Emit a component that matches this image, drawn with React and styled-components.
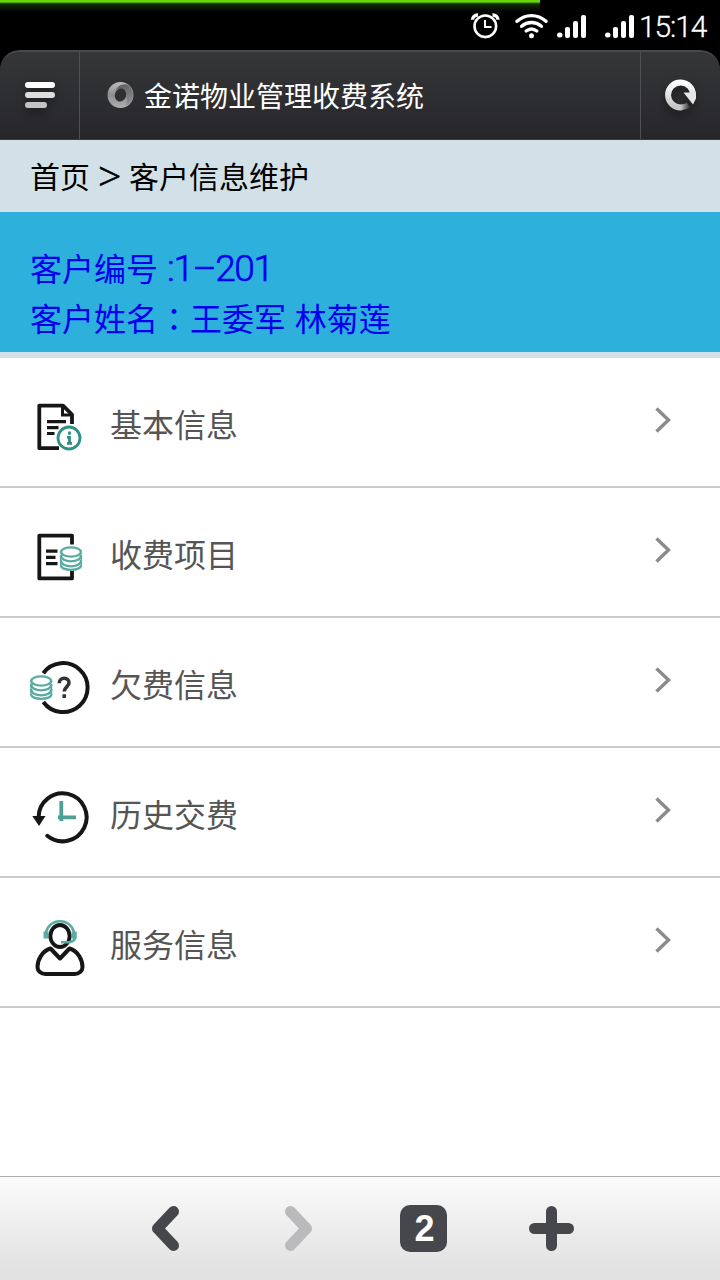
import React from "react";
import styled, { createGlobalStyle } from "styled-components";

const GlobalStyle = createGlobalStyle`
  * {
    box-sizing: border-box;
  }

  body {
    margin: 0;
    background-color: #fff;
    font-family: "Noto Sans CJK SC", sans-serif;
  }
`;

// Styled components
const Screen = styled.div`
  display: flex;
  flex-direction: column;
  width: 720px;
  height: 1280px;
  overflow: hidden;
  background-color: #fff;
`;

const TopArea = styled.div`
  background-color: #000;
`;

const StatusBar = styled.div`
  position: relative;
  display: flex;
  align-items: flex-start;
  justify-content: flex-end;
  height: 50px;
  padding: 12px 13px 0 0;
`;

const LoadingBar = styled.div`
  position: absolute;
  top: 0;
  left: 0;
  width: 540px;
  height: 12px;
  background: linear-gradient(
    #69d607 0,
    #69d607 2px,
    #2c6a02 3px,
    #132c01 4px,
    #000 12px
  );
`;

const StatusIcon = styled.svg`
  position: relative;
  flex: none;
  width: ${(props) => props.$width}px;
  height: 28px;
  margin-right: ${(props) => props.$gap}px;
`;

const Clock = styled.span`
  width: 68px;
  color: #fff;
  font-family: Roboto, sans-serif;
  font-size: 30px;
  font-weight: 300;
  line-height: 30px;
  letter-spacing: -1.1px;
  white-space: nowrap;
  -webkit-text-stroke: 0.3px #fff;
`;

const Header = styled.header`
  display: flex;
  height: 90px;
  border-top: 2px solid #4a4a4c;
  border-bottom: 1px solid #3b3a3e;
  border-radius: 20px 20px 0 0;
  background: linear-gradient(#353638, #27272b);
`;

const HeaderButton = styled.div`
  display: flex;
  align-items: center;
  justify-content: center;
  width: 79px;
  padding-bottom: 2px;
  filter: drop-shadow(0 5px 4px rgba(0, 0, 0, 0.4));
`;

const HeaderTitle = styled.div`
  display: flex;
  flex: 1;
  align-items: center;
  gap: 10px;
  padding: 0 0 2px 27px;
  border-left: 1px solid #505053;
  border-right: 1px solid #505053;
  color: #fff;
  font-size: 28px;
  line-height: 40px;
  white-space: nowrap;
`;

const Breadcrumb = styled.div`
  height: 72px;
  padding-left: 30px;
  background-color: #d2e0e7;
  color: #000;
  font-size: 30px;
  line-height: 71px;
  white-space: nowrap;
`;

const Separator = styled.span`
  display: inline-block;
  width: 39px;
  padding-left: 8px;
  font-family: "Open Sans", sans-serif;
  font-size: 41px;
  font-weight: 300;
  line-height: 40px;
  vertical-align: -3px;
  -webkit-text-stroke: 0.6px #000;
`;

const Customer = styled.div`
  height: 146px;
  padding: 30px 0 0 30px;
  border-bottom: 6px solid #d2e0e7;
  background-color: #2db0dc;
  color: #0000f0;
`;

const CustomerLine = styled.div`
  height: 50px;
  font-size: 32px;
  line-height: 50px;
  white-space: nowrap;
  word-spacing: 1.5px;
`;

const CustomerNumber = styled.span`
  margin-left: 9px;
  font-family: Roboto, sans-serif;
  font-size: 37px;
  font-weight: 300;
  line-height: 40px;
  letter-spacing: -1.4px;
  -webkit-text-stroke: 0.6px #0000f0;
`;

const WideColon = styled.span`
  font-family: "Noto Sans CJK TC", sans-serif;
`;

const Menu = styled.div`
  flex: 1;
`;

const MenuRow = styled.div`
  display: flex;
  align-items: flex-start;
  height: 130px;
  padding: 39px 49px 0 30px;
  border-bottom: 2px solid #cbcbcb;
`;

const MenuIcon = styled.svg`
  flex: none;
  width: 60px;
  height: 60px;
  fill: none;
  stroke: #161616;
  stroke-width: 3.8;
`;

const MenuLabel = styled.span`
  flex: 1;
  margin-left: 20px;
  color: #555;
  font-size: 32px;
  line-height: 53px;
`;

const Chevron = styled.svg`
  width: 16px;
  height: 28px;
  margin-top: 9px;
  fill: none;
  stroke: #8b8b8b;
  stroke-width: 3.4;
`;

const Toolbar = styled.nav`
  display: flex;
  align-items: flex-start;
  height: 104px;
  padding: 28px 0 0 151px;
  border-top: 1px solid #acacac;
  background: linear-gradient(#fbfbfb, #e2e2e2 90%);
`;

const ToolIcon = styled.svg`
  flex: none;
  width: ${(props) => props.$width}px;
  height: 47px;
  margin-right: ${(props) => props.$gap}px;
  fill: none;
  stroke: ${(props) => props.$color || "#46474c"};
  stroke-width: 11;
  stroke-linecap: round;
  stroke-linejoin: round;
`;

const TabCount = styled.div`
  flex: none;
  width: 47px;
  height: 47px;
  margin-right: 81px;
  padding-left: 2px;
  border-radius: 10px;
  background-color: #46474c;
  color: #fff;
  font-family: "Liberation Sans", sans-serif;
  font-size: 36px;
  font-weight: bold;
  line-height: 48px;
  text-align: center;
`;

const TEAL = "#2f9085";
const LIGHT_TEAL = "#5aaba1";

const Signal = ({ gap }) => (
  <StatusIcon $width={30} $gap={gap} viewBox="0 0 30 28">
    <g fill="#fff">
      <rect x="0" y="20.5" width="5.5" height="5" rx="2.5" />
      <rect x="8" y="15" width="5" height="11" rx="2" />
      <rect x="16" y="9" width="5" height="17" rx="2" />
      <rect x="24" y="3" width="5" height="23" rx="2" />
    </g>
  </StatusIcon>
);

const Coins = ({ x, y }) => (
  <g stroke={LIGHT_TEAL} strokeWidth="2.4" transform={`translate(${x} ${y})`}>
    <ellipse cx="0" cy="0" rx="10" ry="4.6" />
    <path d="M-10 3c-1 8.5 21 8.5 20 0" />
    <path d="M-10 8c-1 8.5 21 8.5 20 0" />
    <path d="M-10 13c-1 6.5 21 6.5 20 0" />
    <path d="M-10.3 4v10M10.3 4v10" strokeWidth="1.4" />
  </g>
);

const InfoIcon = () => (
  <MenuIcon viewBox="0 0 60 60">
    <path d="M42 27V17.5L33 8.6H9.3V51.2H29" strokeLinejoin="round" />
    <path d="M32.5 9v9h9" strokeWidth="3" />
    <path d="M17 24.7h19M17 30.7h11.5M17 36.5h7.5" strokeWidth="3.2" />
    <circle cx="39" cy="41" r="11" stroke={TEAL} strokeWidth="2.8" />
    <path
      d="M39.5 34.5v3.2M37 40.3h2.5v6.2M37 46.3h5"
      stroke={TEAL}
      strokeWidth="2.8"
    />
  </MenuIcon>
);

const ChargeIcon = () => (
  <MenuIcon viewBox="0 0 60 60">
    <path d="M42 17.5V8.6H9.3v42.8H42V44" strokeLinejoin="round" />
    <path d="M16 24.2h11.5M16 30.3h9.5M16 36.6h11.5" strokeWidth="3.2" />
    <Coins x={41} y={25} />
  </MenuIcon>
);

const ArrearsIcon = () => (
  <MenuIcon viewBox="0 0 60 60">
    <path d="M13.3 16.2A24.5 24.5 0 1 1 13.3 45" strokeWidth="4" />
    <path
      d="M29.2 26.3c0-6.6 9.8-6.6 9.8-.5 0 4-4.8 4.3-4.8 8.8M34.2 37.3v3.6"
      stroke="#333"
      strokeWidth="3.6"
    />
    <Coins x={11.2} y={24} />
  </MenuIcon>
);

const HistoryIcon = () => (
  <MenuIcon viewBox="0 0 60 60">
    <path
      d="M8.6 30.5A24 24 0 1 1 17.3 48.8"
      strokeWidth="4"
      strokeLinecap="round"
    />
    <path d="M2.3 29h13.2L9 39z" fill="#161616" stroke="none" />
    <path d="M31.3 14v20M28 30.3h18" stroke="#4f9f96" strokeWidth="3.8" />
  </MenuIcon>
);

const ServiceIcon = () => (
  <MenuIcon viewBox="0 0 60 60">
    <path
      d="M15.5 20C15.5-1 44.5-1 44.5 20"
      stroke={LIGHT_TEAL}
      strokeWidth="2.6"
    />
    <path d="M16 14.5v7M44.2 14.5v7" stroke={LIGHT_TEAL} strokeWidth="5" />
    <ellipse cx="30" cy="19" rx="9.6" ry="11" />
    <path d="M45 20c0 5-5 5.7-14 5.2" stroke={LIGHT_TEAL} strokeWidth="2.6" />
    <path
      d="M20.5 31.5L30 41.5l9.5-10C48 34 52.500 43 52.500 50c0 4-3.500 7-8 7h-29c-4.500 0-8-3-8-7 0-7 4.500-16 13-18.500z"
      strokeWidth="4"
      strokeLinejoin="round"
    />
  </MenuIcon>
);

const menuItems = [
  { label: "基本信息", Icon: InfoIcon },
  { label: "收费项目", Icon: ChargeIcon },
  { label: "欠费信息", Icon: ArrearsIcon },
  { label: "历史交费", Icon: HistoryIcon },
  { label: "服务信息", Icon: ServiceIcon },
];

const App = () => {
  return (
    <Screen>
      <GlobalStyle />
      <TopArea>
        <StatusBar>
          <LoadingBar />
          <StatusIcon $width={30} $gap={15} viewBox="0 0 30 28">
            <g fill="none" stroke="#fff" strokeWidth="2.6">
              <circle cx="15.3" cy="14.3" r="10.8" />
              <path d="M15 8v7h6.5" strokeWidth="2" />
              <path
                d="M2.5 7.8C2.5 5 5 2.8 8 3M28 7.8C28 5 25.5 2.8 22.5 3"
                strokeWidth="3.4"
              />
            </g>
          </StatusIcon>
          <StatusIcon $width={33} $gap={9} viewBox="0 0 33 28">
            <g
              fill="none"
              stroke="#fff"
              strokeWidth="3.4"
              strokeLinecap="round"
            >
              <path d="M2 9.3c8.5-7.6 20.5-7.6 29 0" />
              <path d="M6.6 14.3c6-5 13.8-5 19.8 0" />
              <path d="M11.2 19c3.4-2.7 7.2-2.7 10.6 0" />
            </g>
            <circle cx="16.5" cy="23.7" r="2.5" fill="#fff" />
          </StatusIcon>
          <Signal gap={18} />
          <Signal gap={4} />
          <Clock>15:14</Clock>
        </StatusBar>
        <Header>
          <HeaderButton>
            <svg width="32" height="28" viewBox="0 0 32 28">
              <rect x="1" y="1" width="30" height="6" rx="3" fill="#fff" />
              <rect x="1" y="11" width="30" height="6" rx="3" fill="#dedede" />
              <rect x="1" y="21" width="22" height="6" rx="3" fill="#c3c3c3" />
            </svg>
          </HeaderButton>
          <HeaderTitle>
            <svg width="27" height="28" viewBox="0 0 27 28">
              <defs>
                <linearGradient id="ring" x1="0" y1="0" x2="0" y2="1">
                  <stop offset="0" stopColor="#bdbdbd" />
                  <stop offset="0.5" stopColor="#8e8e8e" />
                  <stop offset="1" stopColor="#b0b0b0" />
                </linearGradient>
                <linearGradient id="ringShade" x1="0" y1="0" x2="0.5" y2="1">
                  <stop offset="0" stopColor="#585858" />
                  <stop offset="1" stopColor="#8c8c8c" />
                </linearGradient>
              </defs>
              <circle cx="13.5" cy="14" r="13" fill="url(#ring)" />
              <path
                d="M8 11C10 4 18 1 22.5 5 28 11 27 20 19 25 22 17 17 7 12 8 10 8 9 9 8 11z"
                fill="url(#ringShade)"
              />
              <ellipse
                cx="13.5"
                cy="14"
                rx="5.6"
                ry="6.6"
                transform="rotate(20 13.5 14)"
                fill="#2e2f31"
              />
            </svg>
            金诺物业管理收费系统
          </HeaderTitle>
          <HeaderButton>
            <svg width="32" height="32" viewBox="0 0 32 32">
              <defs>
                <linearGradient id="reload" x1="0" y1="0" x2="0" y2="1">
                  <stop offset="0" stopColor="#fff" />
                  <stop offset="1" stopColor="#c4c4c4" />
                </linearGradient>
                <linearGradient id="reloadTail" x1="0" y1="0" x2="1" y2="0">
                  <stop offset="0" stopColor="#c4c4c4" />
                  <stop offset="1" stopColor="#444" />
                </linearGradient>
              </defs>
              <path
                d="M28 17A12.5 12.5 0 1 0 16.500 28.400"
                fill="none"
                stroke="url(#reload)"
                strokeWidth="6"
              />
              <path
                d="M16 28.4q4.500-.2 7.500-2.400"
                fill="none"
                stroke="url(#reloadTail)"
                strokeWidth="5.6"
              />
              <path d="M18.500 13.500H31v6L28 25.500z" fill="#e6e6e6" />
            </svg>
          </HeaderButton>
        </Header>
      </TopArea>
      <Breadcrumb>
        首页<Separator>&gt;</Separator>客户信息维护
      </Breadcrumb>
      <Customer>
        <CustomerLine>
          客户编号<CustomerNumber>:1–201</CustomerNumber>
        </CustomerLine>
        <CustomerLine>
          客户姓名<WideColon lang="zh-TW">：</WideColon>王委军 林菊莲
        </CustomerLine>
      </Customer>
      <Menu>
        {menuItems.map(({ label, Icon }) => (
          <MenuRow key={label}>
            <Icon />
            <MenuLabel>{label}</MenuLabel>
            <Chevron viewBox="0 0 16 28">
              <path d="M1.5 2.5L13.5 14 1.5 25.5" />
            </Chevron>
          </MenuRow>
        ))}
      </Menu>
      <Toolbar>
        <ToolIcon $width={30} $gap={103} viewBox="0 0 30 47">
          <path d="M22.5 6.5L6.5 23.5l16 17" />
        </ToolIcon>
        <ToolIcon $width={30} $gap={86} $color="#bababc" viewBox="0 0 30 47">
          <path d="M6.5 6.5L22.5 23.5l-16 17" />
        </ToolIcon>
        <TabCount>2</TabCount>
        <ToolIcon $width={47} $gap={0} viewBox="0 0 47 47">
          <path d="M23.5 6.5v34M6.5 23.5h34" />
        </ToolIcon>
      </Toolbar>
    </Screen>
  );
};

export default App;
